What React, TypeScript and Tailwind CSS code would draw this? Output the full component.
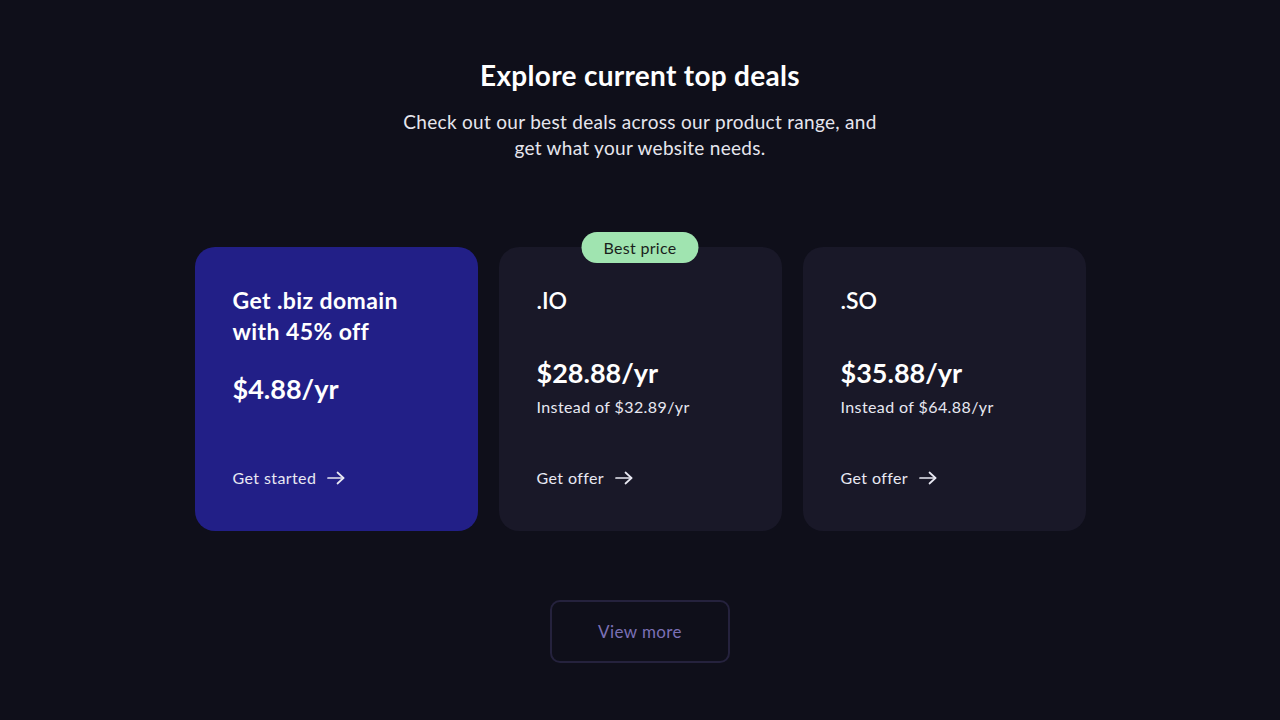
import React from "react";

function Arrow() {
  return (
    <svg width="18" height="14" viewBox="0 0 18 14" fill="none" stroke="currentColor" strokeWidth="1.7" strokeLinecap="round" strokeLinejoin="round">
      <path d="M1 7h15.5" />
      <path d="M10.5 1.5 16.5 7l-6 5.5" />
    </svg>
  );
}

export default function App() {
  return (
    <div
      className="min-h-[720px] w-full bg-[#0f0f1a] text-white flex flex-col items-center pt-[57px]"
      style={{ fontFamily: "Lato, 'Noto Sans', sans-serif" }}
    >
      <h1 className="text-[28px] leading-[36px] font-bold text-white tracking-[0.3px]">Explore current top deals</h1>
      <p className="mt-[16px] text-[19px] leading-[26px] text-[#e6e6ee] text-center w-[480px] tracking-[0.3px]">
        Check out our best deals across our product range, and get what your website needs.
      </p>

      <div className="mt-[86px] flex gap-[21px]">
        <div className="w-[283px] h-[284px] rounded-[20px] bg-[#221f87] flex flex-col px-[38px] pt-[38px] pb-[41px]">
          <div className="text-[23px] leading-[31px] font-bold tracking-[0.4px]">Get .biz domain<br />with 45% off</div>
          <div className="mt-[24px] text-[27px] leading-[36px] font-bold">$4.88/yr</div>
          <a className="mt-auto flex items-center gap-[11px] text-[16px] leading-[24px] text-[#e8e8f2] tracking-[0.4px]">
            Get started <Arrow />
          </a>
        </div>

        <div className="relative w-[283px] h-[284px] rounded-[20px] bg-[#191828] flex flex-col px-[38px] pt-[38px] pb-[41px]">
          <div className="absolute left-1/2 -translate-x-1/2 -top-[15px] h-[31px] w-[117px] rounded-full bg-[#a0e4b0] text-[#1a1f1c] text-[16px] tracking-[0.3px] flex items-center justify-center">
            Best price
          </div>
          <div className="text-[23px] leading-[31px] font-semibold">.IO</div>
          <div className="mt-[39px] text-[27px] leading-[36px] font-bold">$28.88/yr</div>
          <div className="mt-[4px] text-[16px] leading-[24px] text-[#e8e8f2] tracking-[0.4px]">Instead of $32.89/yr</div>
          <a className="mt-auto flex items-center gap-[11px] text-[16px] leading-[24px] text-[#e8e8f2] tracking-[0.4px]">
            Get offer <Arrow />
          </a>
        </div>

        <div className="w-[283px] h-[284px] rounded-[20px] bg-[#191828] flex flex-col px-[38px] pt-[38px] pb-[41px]">
          <div className="text-[23px] leading-[31px] font-semibold">.SO</div>
          <div className="mt-[39px] text-[27px] leading-[36px] font-bold">$35.88/yr</div>
          <div className="mt-[4px] text-[16px] leading-[24px] text-[#e8e8f2] tracking-[0.4px]">Instead of $64.88/yr</div>
          <a className="mt-auto flex items-center gap-[11px] text-[16px] leading-[24px] text-[#e8e8f2] tracking-[0.4px]">
            Get offer <Arrow />
          </a>
        </div>
      </div>

      <button className="mt-[69px] w-[180px] h-[63px] rounded-[10px] border-2 border-[#25223d] text-[#7b70b6] text-[17px] tracking-[0.4px] bg-transparent">
        View more
      </button>
    </div>
  );
}
